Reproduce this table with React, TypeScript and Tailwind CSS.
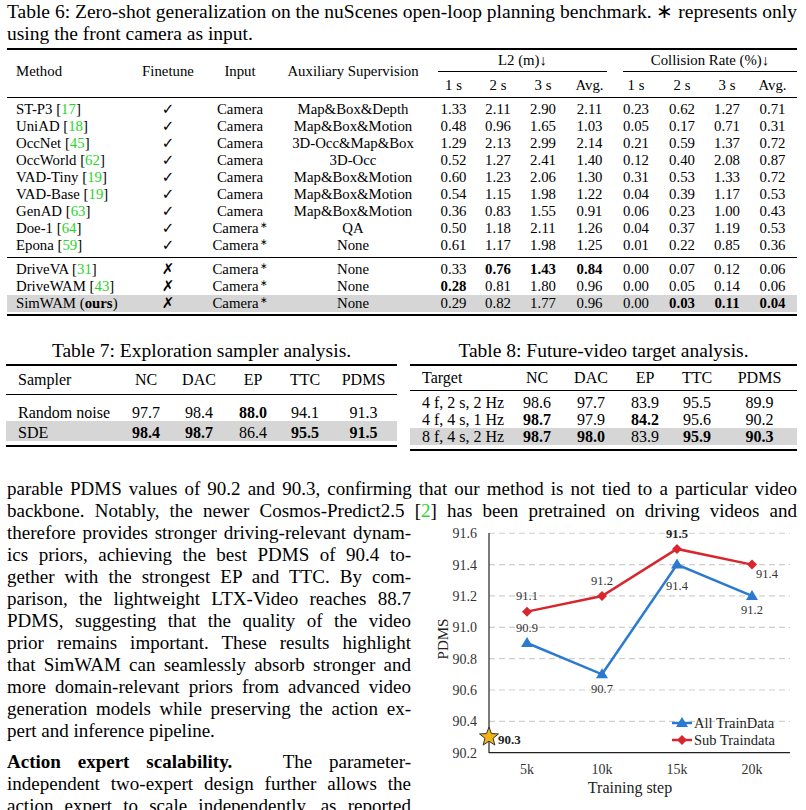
import React from 'react';

const T6 = 'grid grid-cols-[123px_76px_68px_158px_43px_46px_44px_49px_44px_48px_42px_49px]';
const T7 = 'grid grid-cols-[114px_52px_54px_54px_50px_67px]';
const T8 = 'grid grid-cols-[100px_54px_54px_54px_50px_75px]';
const JL = 'whitespace-nowrap text-justify [text-align-last:justify]';

function Cite({ n }: { n: string }) {
  return (
    <>
      [<span className="text-[#2ad42a]">{n}</span>]
    </>
  );
}

function Star() {
  return <span className="relative -top-[5px] ml-[1px] text-[9px]">∗</span>;
}

type Row6 = { name: string; cite: string; ours?: boolean; ft: boolean; star: boolean; aux: string; vals: string[]; bold: number[] };

const rowsA: Row6[] = [
  { name: 'ST-P3', cite: '17', ft: true, star: false, aux: 'Map&Box&Depth', vals: ['1.33', '2.11', '2.90', '2.11', '0.23', '0.62', '1.27', '0.71'], bold: [] },
  { name: 'UniAD', cite: '18', ft: true, star: false, aux: 'Map&Box&Motion', vals: ['0.48', '0.96', '1.65', '1.03', '0.05', '0.17', '0.71', '0.31'], bold: [] },
  { name: 'OccNet', cite: '45', ft: true, star: false, aux: '3D-Occ&Map&Box', vals: ['1.29', '2.13', '2.99', '2.14', '0.21', '0.59', '1.37', '0.72'], bold: [] },
  { name: 'OccWorld', cite: '62', ft: true, star: false, aux: '3D-Occ', vals: ['0.52', '1.27', '2.41', '1.40', '0.12', '0.40', '2.08', '0.87'], bold: [] },
  { name: 'VAD-Tiny', cite: '19', ft: true, star: false, aux: 'Map&Box&Motion', vals: ['0.60', '1.23', '2.06', '1.30', '0.31', '0.53', '1.33', '0.72'], bold: [] },
  { name: 'VAD-Base', cite: '19', ft: true, star: false, aux: 'Map&Box&Motion', vals: ['0.54', '1.15', '1.98', '1.22', '0.04', '0.39', '1.17', '0.53'], bold: [] },
  { name: 'GenAD', cite: '63', ft: true, star: false, aux: 'Map&Box&Motion', vals: ['0.36', '0.83', '1.55', '0.91', '0.06', '0.23', '1.00', '0.43'], bold: [] },
  { name: 'Doe-1', cite: '64', ft: true, star: true, aux: 'QA', vals: ['0.50', '1.18', '2.11', '1.26', '0.04', '0.37', '1.19', '0.53'], bold: [] },
  { name: 'Epona', cite: '59', ft: true, star: true, aux: 'None', vals: ['0.61', '1.17', '1.98', '1.25', '0.01', '0.22', '0.85', '0.36'], bold: [] },
];

const rowsB: Row6[] = [
  { name: 'DriveVA', cite: '31', ft: false, star: true, aux: 'None', vals: ['0.33', '0.76', '1.43', '0.84', '0.00', '0.07', '0.12', '0.06'], bold: [1, 2, 3] },
  { name: 'DriveWAM', cite: '43', ft: false, star: true, aux: 'None', vals: ['0.28', '0.81', '1.80', '0.96', '0.00', '0.05', '0.14', '0.06'], bold: [0] },
  { name: 'SimWAM', cite: '', ours: true, ft: false, star: true, aux: 'None', vals: ['0.29', '0.82', '1.77', '0.96', '0.00', '0.03', '0.11', '0.04'], bold: [5, 6, 7] },
];

function Table6Row({ r }: { r: Row6 }) {
  return (
    <div className={`${T6} h-[17px] leading-[17px] ${r.ours ? 'bg-[#d6d6d6]' : ''}`}>
      <div className="pl-[9px] whitespace-nowrap">
        {r.ours ? (
          <>
            SimWAM (<b>ours</b>)
          </>
        ) : (
          <>
            {r.name} <Cite n={r.cite} />
          </>
        )}
      </div>
      <div className="text-center font-['DejaVu_Sans',sans-serif] text-[15px] font-bold">{r.ft ? '✓' : '✗'}</div>
      <div className="text-center whitespace-nowrap">
        Camera{r.star && <Star />}
      </div>
      <div className="text-center whitespace-nowrap">{r.aux}</div>
      {r.vals.map((v, i) => (
        <div key={i} className={`text-center ${r.bold.includes(i) ? 'font-bold' : ''}`}>
          {v}
        </div>
      ))}
    </div>
  );
}

function Table6() {
  return (
    <div className="mt-[3px] w-[790px] text-[14.8px]">
      <div className="h-[2px] bg-black" />
      <div className={`${T6} grid-rows-[22px_25px]`}>
        <div className="row-span-2 flex items-center pb-[4px] pl-[9px]">Method</div>
        <div className="row-span-2 flex items-center justify-center pb-[4px]">Finetune</div>
        <div className="row-span-2 flex items-center justify-center pb-[4px]">Input</div>
        <div className="row-span-2 flex items-center justify-center pb-[4px]">Auxiliary Supervision</div>
        <div className="col-span-4 ml-[6px] mr-[7px] flex items-center justify-center border-b border-black">L2 (m)↓</div>
        <div className="col-span-4 ml-[9px] flex items-center justify-center border-b border-black">Collision Rate (%)↓</div>
        {['1 s', '2 s', '3 s', 'Avg.', '1 s', '2 s', '3 s', 'Avg.'].map((h, i) => (
          <div key={i} className="pt-[5px] text-center leading-[17px]">
            {h}
          </div>
        ))}
      </div>
      <div className="h-px bg-black" />
      <div className="pt-[3px] pb-[3px]">
        {rowsA.map((r) => (
          <Table6Row key={r.name} r={r} />
        ))}
      </div>
      <div className="h-px bg-black" />
      <div className="pt-[3px] pb-[2px]">
        {rowsB.map((r) => (
          <Table6Row key={r.name} r={r} />
        ))}
      </div>
      <div className="h-[2px] bg-black" />
    </div>
  );
}

function Table7() {
  const rows = [
    { name: 'Random noise', vals: ['97.7', '98.4', '88.0', '94.1', '91.3'], bold: [2], gray: false },
    { name: 'SDE', vals: ['98.4', '98.7', '86.4', '95.5', '91.5'], bold: [0, 1, 3, 4], gray: true },
  ];
  return (
    <div className="w-[391px]">
      <div className="whitespace-nowrap text-center text-[19.5px] leading-[22px]">Table 7: Exploration sampler analysis.</div>
      <div className="mt-[2px] h-[2px] bg-black" />
      <div className={`${T7} h-[28px] items-center text-[16px]`}>
        <div className="pl-[12px]">Sampler</div>
        {['NC', 'DAC', 'EP', 'TTC', 'PDMS'].map((h) => (
          <div key={h} className="text-center">
            {h}
          </div>
        ))}
      </div>
      <div className="h-px bg-black" />
      <div className="pt-[6px] pb-[4px] text-[16px]">
        {rows.map((r) => (
          <div key={r.name} className={`${T7} h-[20px] items-center ${r.gray ? 'bg-[#d6d6d6]' : ''}`}>
            <div className="pl-[12px] whitespace-nowrap">{r.name}</div>
            {r.vals.map((v, i) => (
              <div key={i} className={`text-center ${r.bold.includes(i) ? 'font-bold' : ''}`}>
                {v}
              </div>
            ))}
          </div>
        ))}
      </div>
      <div className="h-[2px] bg-black" />
    </div>
  );
}

function Table8() {
  const rows = [
    { name: '4 f, 2 s, 2 Hz', vals: ['98.6', '97.7', '83.9', '95.5', '89.9'], bold: [] as number[], gray: false },
    { name: '4 f, 4 s, 1 Hz', vals: ['98.7', '97.9', '84.2', '95.6', '90.2'], bold: [0, 2], gray: false },
    { name: '8 f, 4 s, 2 Hz', vals: ['98.7', '98.0', '83.9', '95.9', '90.3'], bold: [0, 1, 3, 4], gray: true },
  ];
  return (
    <div className="w-[387px]">
      <div className="whitespace-nowrap text-center text-[19.5px] leading-[22px]">Table 8: Future-video target analysis.</div>
      <div className="mt-[2px] h-[2px] bg-black" />
      <div className={`${T8} h-[24px] items-center text-[16px]`}>
        <div className="pl-[12px]">Target</div>
        {['NC', 'DAC', 'EP', 'TTC', 'PDMS'].map((h) => (
          <div key={h} className="text-center">
            {h}
          </div>
        ))}
      </div>
      <div className="h-px bg-black" />
      <div className="pt-[3px] pb-[4px] text-[16px]">
        {rows.map((r) => (
          <div key={r.name} className={`${T8} h-[17px] items-center leading-[17px] ${r.gray ? 'bg-[#d6d6d6]' : ''}`}>
            <div className="pl-[12px] whitespace-nowrap">{r.name}</div>
            {r.vals.map((v, i) => (
              <div key={i} className={`text-center ${r.bold.includes(i) ? 'font-bold' : ''}`}>
                {v}
              </div>
            ))}
          </div>
        ))}
      </div>
      <div className="h-[2px] bg-black" />
    </div>
  );
}

const yOf = (v: number) => 751.7 - (v - 90.2) * 156.75;
const xs = [527, 602, 677, 752];

function starPoints(cx: number, cy: number, ro: number, ri: number) {
  const pts: string[] = [];
  for (let i = 0; i < 10; i++) {
    const r = i % 2 === 0 ? ro : ri;
    const a = -Math.PI / 2 + (i * Math.PI) / 5;
    pts.push(`${(cx + r * Math.cos(a)).toFixed(1)},${(cy + r * Math.sin(a)).toFixed(1)}`);
  }
  return pts.join(' ');
}

const diamond = (x: number, y: number) => `M${x},${y - 5} L${x + 5},${y} L${x},${y + 5} L${x - 5},${y} Z`;
const tri = (x: number, y: number) => `M${x},${y - 6} L${x + 6},${y + 4} L${x - 6},${y + 4} Z`;

function Chart() {
  const red = [91.1, 91.2, 91.5, 91.4];
  const blue = [90.9, 90.7, 91.4, 91.2];
  const ticks = [90.2, 90.4, 90.6, 90.8, 91.0, 91.2, 91.4, 91.6];
  const RED = '#d7262e';
  const BLUE = '#2a7bcf';
  const txt = { fontFamily: 'Liberation Serif, serif' };
  return (
    <svg width={395} height={289} viewBox="411 521 395 289" style={txt}>
      {ticks.slice(1).map((t) => (
        <line key={t} x1={489} x2={790} y1={yOf(t)} y2={yOf(t)} stroke="#cfcfcf" strokeWidth={1.2} strokeDasharray="6 4" />
      ))}
      {ticks.map((t) => (
        <text key={t} x={477} y={yOf(t) + 5} textAnchor="end" fontSize={14} fill="#333">
          {t.toFixed(1)}
        </text>
      ))}
      <line x1={489} x2={489} y1={532} y2={752} stroke="#222" strokeWidth={1.2} />
      <line x1={489} x2={790} y1={751.7} y2={751.7} stroke="#222" strokeWidth={1.2} />
      {['5k', '10k', '15k', '20k'].map((l, i) => (
        <text key={l} x={xs[i]} y={773} textAnchor="middle" fontSize={14} fill="#333">
          {l}
        </text>
      ))}
      <text x={630} y={792} textAnchor="middle" fontSize={16} fill="#222">
        Training step
      </text>
      <text x={0} y={0} transform="translate(448 638) rotate(-90)" textAnchor="middle" fontSize={15} fill="#222">
        PDMS
      </text>

      <polyline points={xs.map((x, i) => `${x},${yOf(blue[i])}`).join(' ')} fill="none" stroke={BLUE} strokeWidth={2.5} />
      {xs.map((x, i) => (
        <path key={x} d={tri(x, yOf(blue[i]))} fill={BLUE} />
      ))}
      <polyline points={xs.map((x, i) => `${x},${yOf(red[i])}`).join(' ')} fill="none" stroke={RED} strokeWidth={2.5} />
      {xs.map((x, i) => (
        <path key={x} d={diamond(x, yOf(red[i]))} fill={RED} />
      ))}

      <g fontSize={12.5} fill="#333" textAnchor="middle">
        <text x={527} y={599}>91.1</text>
        <text x={602} y={584}>91.2</text>
        <text x={677} y={537} fontWeight="bold" fill="#222">91.5</text>
        <text x={767} y={577}>91.4</text>
        <text x={527} y={631}>90.9</text>
        <text x={602} y={692}>90.7</text>
        <text x={677} y={589}>91.4</text>
        <text x={752} y={613}>91.2</text>
      </g>

      <polygon points={starPoints(489, 736, 10, 4.2)} fill="#f3b416" stroke="#333" strokeWidth={1} />
      <text x={498} y={743} fontSize={13} fontWeight="bold" fill="#222">
        90.3
      </text>

      <line x1={672} x2={692} y1={722} y2={722} stroke={BLUE} strokeWidth={2.5} />
      <path d={tri(682, 722)} fill={BLUE} />
      <text x={694} y={727} fontSize={14.5} fill="#222">
        All TrainData
      </text>
      <line x1={672} x2={692} y1={739} y2={739} stroke={RED} strokeWidth={2.5} />
      <path d={diamond(682, 739)} fill={RED} />
      <text x={694} y={744} fontSize={14.5} fill="#222">
        Sub Traindata
      </text>
    </svg>
  );
}

export default function App() {
  return (
    <div className="relative h-[810px] w-[806px] overflow-hidden bg-white font-['Liberation_Serif',serif] text-black">
      <div className="pl-[7px]">
        <div className="w-[790px] pt-[1px] text-[19.5px] leading-[22px]">
          <div className={JL}>Table 6: Zero-shot generalization on the nuScenes open-loop planning benchmark. ∗ represents only</div>
          <div className="whitespace-nowrap">using the front camera as input.</div>
        </div>
        <Table6 />
      </div>

      <div className="mt-[24px] flex gap-[13px] pl-[6px]">
        <Table7 />
        <Table8 />
      </div>

      <div className="mt-[27px] pl-[7px] text-[19px] leading-[22px]">
        <div className={`w-[790px] ${JL}`}>parable PDMS values of 90.2 and 90.3, confirming that our method is not tied to a particular video</div>
        <div className={`w-[790px] ${JL}`}>
          backbone. Notably, the newer Cosmos-Predict2.5 <Cite n="2" /> has been pretrained on driving videos and
        </div>
        <div className="flex">
          <div className="w-[404px]">
            <div className={JL}>therefore provides stronger driving-relevant dynam-</div>
            <div className={JL}>ics priors, achieving the best PDMS of 90.4 to-</div>
            <div className={JL}>gether with the strongest EP and TTC. By com-</div>
            <div className={JL}>parison, the lightweight LTX-Video reaches 88.7</div>
            <div className={JL}>PDMS, suggesting that the quality of the video</div>
            <div className={JL}>prior remains important. These results highlight</div>
            <div className={JL}>that SimWAM can seamlessly absorb stronger and</div>
            <div className={JL}>more domain-relevant priors from advanced video</div>
            <div className={JL}>generation models while preserving the action ex-</div>
            <div className="whitespace-nowrap">pert and inference pipeline.</div>
            <div className={`mt-[9px] ${JL}`}>
              <b>Action expert scalability.</b>&nbsp;&nbsp; The parameter-
            </div>
            <div className={JL}>independent two-expert design further allows the</div>
            <div className={JL}>action expert to scale independently, as reported</div>
          </div>
          <Chart />
        </div>
      </div>
    </div>
  );
}
